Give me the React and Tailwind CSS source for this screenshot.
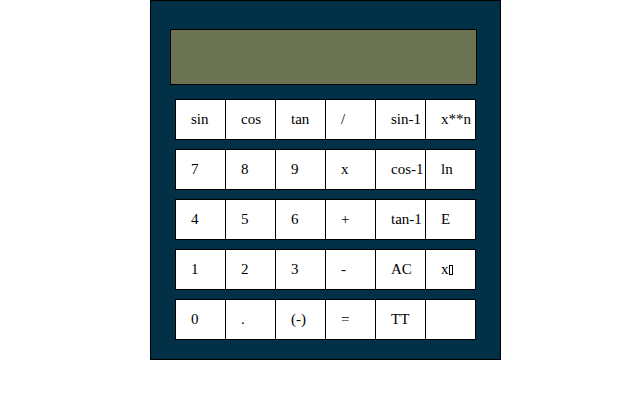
const rows = [
  ["sin", "cos", "tan", "/", "sin-1", "x**n"],
  ["7", "8", "9", "x", "cos-1", "ln"],
  ["4", "5", "6", "+", "tan-1", "E"],
  ["1", "2", "3", "-", "AC", "x#"],
  ["0", ".", "(-)", "=", "TT", ""],
];

function Key({ label, last }) {
  return (
    <div
      className={
        "h-[41px] flex items-center pl-[15px] bg-white border-y border-l border-black text-[15px] text-black whitespace-nowrap overflow-hidden " +
        (last ? "w-[51px] border-r" : "w-[50px]")
      }
    >
      {label === "x#" ? (
        <span className="flex items-center">
          x
          <span className="inline-block w-[4px] h-[10px] border border-black ml-[0px]" />
        </span>
      ) : (
        label
      )}
    </div>
  );
}

export default function App() {
  return (
    <div
      className="w-[641px] h-[400px] bg-white"
      style={{ fontFamily: '"Liberation Serif", serif' }}
    >
      <div className="ml-[150px] w-[351px] h-[360px] border border-black bg-[#023047] pt-[28px]">
        <div className="ml-[19px] w-[307px] h-[56px] border border-black bg-[#6b7352]" />
        <div className="mt-[14px] ml-[24px] flex flex-col gap-[9px]">
          {rows.map((row, i) => (
            <div key={i} className="flex">
              {row.map((k, j) => (
                <Key key={j} label={k} last={j === row.length - 1} />
              ))}
            </div>
          ))}
        </div>
      </div>
    </div>
  );
}
